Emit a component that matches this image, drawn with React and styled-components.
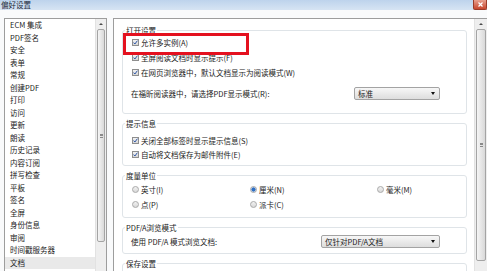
import React from 'react';
import styled, { createGlobalStyle } from 'styled-components';

const GlobalStyle = createGlobalStyle`
  html, body {
    margin: 0;
    padding: 0;
    overflow: hidden;
  }
  body {
    font-family: "Noto Sans CJK SC", "Noto Sans", sans-serif;
    color: #1a1a1a;
  }
`;

const Window = styled.div`
  width: 487px;
  height: 271px;
  display: flex;
  flex-direction: column;
  background: #f9fafb;
  overflow: hidden;
`;

const TitleBar = styled.div`
  height: 10px;
  flex: none;
  display: flex;
  align-items: center;
  justify-content: space-between;
  background: linear-gradient(#bdd3ec, #d6e4f3);
  font-size: 7.5px;
  line-height: 10px;
`;

const Title = styled.span`
  margin-left: 1px;
  color: #1e2a3a;
`;

const CloseButton = styled.div`
  width: 12px;
  height: 9px;
  align-self: flex-start;
  border-radius: 0 0 2px 2px;
  background: linear-gradient(#e8a08f, #c8472e);
  border: 1px solid #9b3b28;
  border-top: none;
  display: flex;
  align-items: center;
  justify-content: center;
`;

const Body = styled.div`
  flex: 1;
  min-height: 0;
  display: flex;
  gap: 6px;
  padding: 8px 0 0 4px;
`;

const Sidebar = styled.div`
  width: 103px;
  box-sizing: border-box;
  flex: none;
  display: flex;
  background: #fff;
  border: 1px solid #9d9d9d;
  border-bottom: none;
`;

const List = styled.div`
  flex: 1;
  display: flex;
  flex-direction: column;
`;

const ListItem = styled.div`
  height: 12.5px;
  line-height: 12.5px;
  font-size: 7.5px;
  padding-left: 5px;
  white-space: nowrap;
  background: ${(p) => (p.$selected ? '#e9e9e9' : 'transparent')};
`;

const ScrollTrack = styled.div`
  width: ${(p) => p.$w}px;
  flex: none;
  display: flex;
  flex-direction: column;
  background: #eeeeee;
  border-left: 1px solid #e2e2e2;
`;

const ScrollArrow = styled.div`
  height: 10px;
  flex: none;
  display: flex;
  align-items: center;
  justify-content: center;
  &::after {
    content: '';
    border-left: 2px solid transparent;
    border-right: 2px solid transparent;
    border-bottom: 2.5px solid #4a4a4a;
  }
`;

const ScrollThumb = styled.div`
  height: ${(p) => p.$h}px;
  margin: 0 1px;
  box-sizing: border-box;
  border: 1px solid #a4a4a4;
  border-radius: 2px;
  background: linear-gradient(90deg, #f5f5f5, #d9d9d9);
  display: flex;
  align-items: center;
  justify-content: center;
`;

const Grip = styled.div`
  width: 3px;
  height: 4px;
  background: repeating-linear-gradient(#8a8a8a 0 1px, transparent 1px 1.5px);
`;

const MainPanel = styled.div`
  flex: 1;
  display: flex;
  background: #fff;
  border: 1px solid #9d9d9d;
  border-right: none;
  border-bottom: none;
  min-width: 0;
`;

const Content = styled.div`
  flex: 1;
  display: flex;
  flex-direction: column;
  gap: 9px;
  padding: 11px 7px 0 8px;
  min-width: 0;
`;

const Group = styled.div`
  position: relative;
  flex: none;
  border: 1px solid #dfe4e8;
  border-radius: 3px;
  padding: ${(p) => p.$pt}px 0 ${(p) => p.$pb}px 9px;
  display: flex;
  flex-direction: column;
`;

const Legend = styled.span`
  position: absolute;
  top: -6px;
  left: 2px;
  padding: 0 1px;
  background: #fff;
  font-size: 7.5px;
  line-height: 11px;
  white-space: nowrap;
`;

const Highlight = styled.div`
  position: absolute;
  left: 0;
  top: 2px;
  width: 126px;
  height: 22px;
  box-sizing: border-box;
  border: 3px solid #e4111f;
  pointer-events: none;
`;

const CheckRow = styled.div`
  height: ${(p) => p.$h || 15}px;
  display: flex;
  align-items: center;
  gap: 2px;
  font-size: 7.5px;
  white-space: nowrap;
`;

const Box = styled.span`
  width: 7px;
  height: 7px;
  box-sizing: border-box;
  border: 1px solid #8e8e8e;
  background: linear-gradient(#f2f2f2, #d6d6d6);
  display: flex;
  align-items: center;
  justify-content: center;
  flex: none;
`;

const ComboRow = styled.div`
  height: 13px;
  margin-top: ${(p) => p.$mt || 0}px;
  margin-left: -1px;
  padding-right: 26px;
  display: flex;
  align-items: center;
  font-size: 7.5px;
  white-space: nowrap;
`;

const ComboLabel = styled.span`
  flex: 1;
`;

const Select = styled.div`
  width: ${(p) => p.$w}px;
  height: 13px;
  box-sizing: border-box;
  border: 1px solid #a3a3a3;
  border-radius: 2px;
  background: linear-gradient(#f7f7f7, #dddddd);
  display: flex;
  align-items: center;
  justify-content: space-between;
  padding: 0 4px 0 3px;
  font-size: 7.5px;
  &::after {
    content: '';
    border-left: 2.5px solid transparent;
    border-right: 2.5px solid transparent;
    border-top: 3px solid #111;
  }
`;

const RadioGrid = styled.div`
  display: grid;
  grid-template-columns: 118px 127px auto;
  grid-auto-rows: 15px;
`;

const RadioItem = styled.div`
  display: flex;
  align-items: center;
  gap: 2px;
  font-size: 7.5px;
  white-space: nowrap;
`;

const Dot = styled.span`
  width: 7px;
  height: 7px;
  box-sizing: border-box;
  border-radius: 50%;
  border: 1px solid #a9a9a9;
  background: ${(p) =>
    p.$on
      ? 'radial-gradient(circle, #2f6fc4 0 1.8px, #c9d9ee 2.3px)'
      : 'linear-gradient(#f2f2f2, #d8d8d8)'};
  flex: none;
`;

const Check = () => (
  <Box>
    <svg width="5" height="5" viewBox="0 0 5 5">
      <path d="M0.6 2.6 L1.9 4 L4.4 0.7" fill="none" stroke="#2c55a6" strokeWidth="1" />
    </svg>
  </Box>
);

const items = [
  'ECM 集成', 'PDF签名', '安全', '表单', '常规', '创建PDF', '打印', '访问', '更新', '朗读',
  '历史记录', '内容订阅', '拼写检查', '平板', '签名', '全屏', '身份信息', '审阅', '时间戳服务器', '文档',
];

const Scrollbar = ({ w, thumb }) => (
  <ScrollTrack $w={w}>
    <ScrollArrow />
    <ScrollThumb $h={thumb}>
      <Grip />
    </ScrollThumb>
  </ScrollTrack>
);

export default function App() {
  return (
    <Window>
      <GlobalStyle />
      <TitleBar>
        <Title>偏好设置</Title>
        <CloseButton>
          <svg width="5" height="5" viewBox="0 0 5 5">
            <path d="M0.5 0.5 L4.5 4.5 M4.5 0.5 L0.5 4.5" stroke="#fff" strokeWidth="1.2" />
          </svg>
        </CloseButton>
      </TitleBar>
      <Body>
        <Sidebar>
          <List>
            {items.map((t, i) => (
              <ListItem key={t} $selected={i === items.length - 1}>{t}</ListItem>
            ))}
          </List>
          <Scrollbar w={10} thumb={213} />
        </Sidebar>
        <MainPanel>
          <Content>
            <Group $pt={4} $pb={13}>
              <Legend>打开设置</Legend>
              <Highlight />
              <CheckRow><Check />允许多实例(A)</CheckRow>
              <CheckRow><Check />全屏阅读文档时显示提示(F)</CheckRow>
              <CheckRow><Check />在网页浏览器中，默认文档显示为阅读模式(W)</CheckRow>
              <ComboRow $mt={7}>
                <ComboLabel>在福昕阅读器中，请选择PDF显示模式(R):</ComboLabel>
                <Select $w={86}>标准</Select>
              </ComboRow>
            </Group>
            <Group $pt={9} $pb={4}>
              <Legend>提示信息</Legend>
              <CheckRow $h={14}><Check />关闭全部标签时显示提示信息(S)</CheckRow>
              <CheckRow $h={14}><Check />自动将文档保存为邮件附件(E)</CheckRow>
            </Group>
            <Group $pt={6} $pb={5}>
              <Legend>度量单位</Legend>
              <RadioGrid>
                <RadioItem><Dot />英寸(I)</RadioItem>
                <RadioItem><Dot $on />厘米(N)</RadioItem>
                <RadioItem><Dot />毫米(M)</RadioItem>
                <RadioItem><Dot />点(P)</RadioItem>
                <RadioItem><Dot />派卡(C)</RadioItem>
              </RadioGrid>
            </Group>
            <Group $pt={7} $pb={5}>
              <Legend>PDF/A浏览模式</Legend>
              <ComboRow>
                <ComboLabel>使用 PDF/A 模式浏览文档:</ComboLabel>
                <Select $w={119}>仅针对PDF/A文档</Select>
              </ComboRow>
            </Group>
            <Group $pt={8} $pb={20}>
              <Legend>保存设置</Legend>
            </Group>
          </Content>
          <Scrollbar w={12} thumb={232} />
        </MainPanel>
      </Body>
    </Window>
  );
}
